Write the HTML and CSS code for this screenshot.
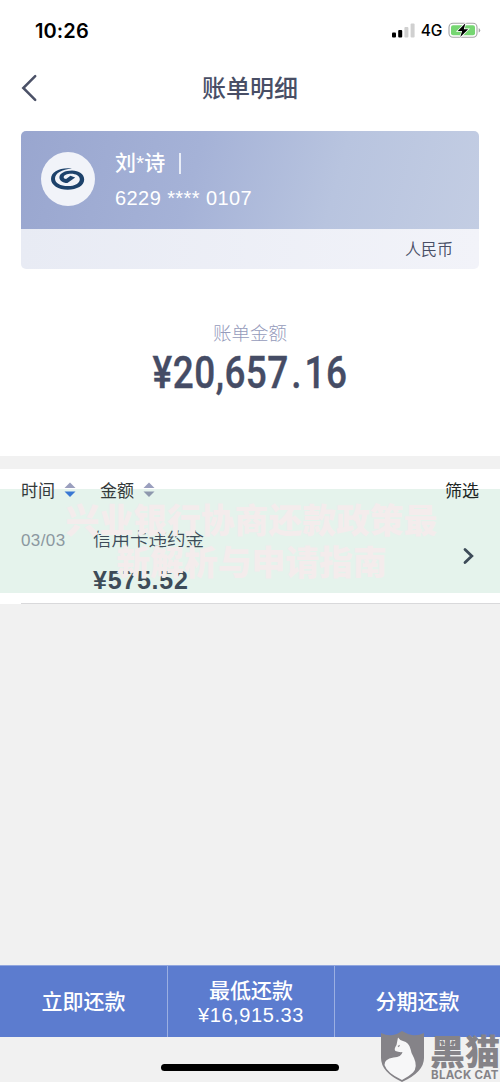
FILE: index.html
```html
<!DOCTYPE html>
<html lang="zh-CN">
<head>
<meta charset="utf-8">
<title>账单明细</title>
<link rel="stylesheet" href="styles.css">
</head>
<body>
<div class="screen">
  <div class="status">
    <span class="clock">10:26</span>
    <div class="status-right">
      <svg class="signal" width="23" height="15" viewBox="0 0 23 15"><rect x="0" y="9.5" width="4" height="5" rx="1"/><rect x="6.2" y="7" width="4" height="7.5" rx="1"/><rect class="off" x="12.4" y="4" width="4" height="10.5" rx="1"/><rect class="off" x="18.6" y="0.5" width="4" height="14" rx="1"/></svg>
      <span class="network">4G</span>
      <svg class="battery" width="33" height="17" viewBox="0 0 33 17"><rect x="1" y="1.2" width="28" height="14" rx="4" fill="#fff" stroke="#a5a5a5" stroke-width="1.1"/><rect x="3" y="3.2" width="24" height="10" rx="2" fill="#76d672"/><path d="M30.7 6v4.6q1.5-.7 1.5-2.3T30.7 6z" fill="#a5a5a5"/><path d="M17.4 1.3 9.7 9.1h4.4l-1.8 6 7.9-7.8h-4.4z" fill="#000" stroke="#fff" stroke-width="1.5" paint-order="stroke"/></svg>
    </div>
  </div>
  <header class="nav">
    <svg class="back" width="18" height="28" viewBox="0 0 18 28"><path d="M14.2 2.2 2.3 14l11.900 11.800" fill="none" stroke="#4b5167" stroke-width="2.500" stroke-linecap="round"/></svg>
    <h1 class="title">账单明细</h1>
  </header>
  <section class="card">
    <div class="card-main">
      <div class="bank"><svg width="34" height="22" viewBox="0 0 34 22"><path fill="#1d426b" d="M21 .6C9-.8 0 4 0 11c0 6.200 7.300 10.700 16.700 10.700 9.200 0 16.500-4.300 16.500-10.300 0-5.300-5.300-9-12.200-9C14 2.400 8.400 5.300 8.400 9.200c0 3.200 3 5.500 8 5.900l7.800-5.500-4.800-1.900-4.300 3.300c-1.500-.2-2.400-.9-2.400-1.800 0-1.900 3.300-3.400 7.300-3.400 5 0 8.800 2.200 8.800 5.400 0 4-5.100 6.900-12 6.900-7.300 0-12.800-3-12.800-7.400C4 5.500 10.500 1.500 21 .6z"/></svg></div>
      <div class="holder">
        <div class="name"><span>刘*诗</span><i class="bar"></i></div>
        <div class="number">6229 **** 0107</div>
      </div>
    </div>
    <div class="currency">人民币</div>
  </section>
  <section class="summary">
    <div class="summary-label">账单金额</div>
    <div class="total">¥20,657<span class="point">.</span>16</div>
  </section>
  <section class="list">
    <div class="filters">
      <span class="sort">时间<svg width="12" height="16" viewBox="0 0 12 16"><path d="M.5 6 6 .5 11.500 6z" fill="#9a9fbe"/><path d="M.5 9.500h11L6 15z" fill="#3978d3"/></svg></span>
      <span class="sort">金额<svg width="12" height="16" viewBox="0 0 12 16"><path d="M.5 6 6 .5 11.500 6z" fill="#9a9fbe"/><path d="M.5 9.500h11L6 15z" fill="#8e98ad"/></svg></span>
      <span class="screening">筛选</span>
    </div>
    <div class="entry">
      <span class="date">03/03</span>
      <div class="detail"><div class="desc">信用卡违约金</div><div class="amount">¥575.52</div></div>
      <svg class="next" width="12" height="18" viewBox="0 0 12 18"><path d="M2 2.500 8.800 9 2 15.500" fill="none" stroke="#3d4b58" stroke-width="2.800" stroke-linecap="round"/></svg>
    </div>
    <div class="banner">兴业银行协商还款政策最<br>新解析与申请指南</div>
  </section>
  <footer class="actions">
    <div class="action">立即还款</div>
    <div class="action"><span>最低还款</span><span class="minimum">¥16,915.33</span></div>
    <div class="action">分期还款</div>
  </footer>
  <div class="home"></div>
  <div class="watermark">
    <svg width="45" height="52" viewBox="0 0 45 52"><path d="M1 2q6 3 12 2 5-1 9-4 5 3 10 4 6 1 12-2v25q0 14-22 24Q1 41 1 27z" fill="#858388"/><path d="M18 6.500q2 3 5 3.500 6 1.500 7.500 8 .5 4 3.500 9 4 9-1 14.500-4 4-11 7.500Q7 42 4.500 34q-.5-6 9-7.500 8-.5 9-5.500-3.500.5-7-1-2-1.500 1-6z" fill="#f7f7f8"/><path d="m17.500 15 2.600-1.200-1.200 2.500z" fill="#858388"/></svg>
    <div class="brand"><div class="brand-cn">黑猫</div><div class="brand-en">BLACK CAT</div></div>
  </div>
</div>
</body>
</html>
```
FILE: styles.css
```css
* { box-sizing: border-box; }
body { margin: 0; background: #f1f1f1; font-family: "Liberation Sans", "Noto Sans CJK SC", sans-serif; color: #484e65; }
svg { display: block; flex: none; }
.screen { position: relative; display: flex; flex-direction: column; width: 500px; height: 1082px; overflow: hidden; background: #f1f1f1; }
.status { display: flex; justify-content: space-between; height: 60px; padding: 0 19px 0 35px; background: #fff; color: #000; }
.clock { font: 600 20px/24px Inter, sans-serif; letter-spacing: .1px; padding-top: 19px; }
.status-right { display: flex; align-items: flex-start; padding-top: 22px; }
.signal { margin-top: .5px; }
.signal .off { fill: #d0d0d0; }
.network { font: 500 15.500px/18px Inter, sans-serif; margin: 0 6px 0 6px; letter-spacing: -.3px; }
.nav { display: flex; align-items: center; height: 71px; background: #fff; padding: 0 21px 16px; }
.title { flex: 1; margin: 2px 18px 0 0; text-align: center; font-size: 24px; line-height: 32px; font-weight: 500; }
.card { flex: none; height: 138px; padding: 0 21px; background: #fff; }
.card-main { display: flex; height: 98px; padding: 0 20px; border-radius: 5px 5px 0 0; background: linear-gradient(105deg, #99a6cf, #a5b2d7 38%, #b8c4df 68%, #c3cde3); color: #fff; }
.bank { display: grid; place-items: center; width: 54px; height: 54px; margin-top: 21px; border-radius: 50%; background: #f1f3f9; }
.holder { padding: 17px 0 0 20px; }
.name { display: flex; align-items: center; font-size: 21px; line-height: 30px; font-weight: 500; }
.bar { width: 1.500px; height: 21px; margin-left: 14px; background: #e8edf7; }
.number { margin-top: 5px; font-size: 20px; line-height: 30px; letter-spacing: .42px; }
.currency { height: 40px; padding-right: 26px; text-align: right; font-size: 16px; line-height: 41px; border-radius: 0 0 5px 5px; background: linear-gradient(90deg, #e8ebf4, #f2f3f9); font-weight: 350; }
.summary { flex: none; height: 187px; padding-top: 51px; background: #fff; text-align: center; }
.summary-label { font-size: 18.500px; line-height: 28px; color: #959bbb; font-weight: 300; }
.total { font: 500 45px/50px Roboto, sans-serif; transform: scaleX(.82); color: #454c65; letter-spacing: .6px; -webkit-text-stroke: .4px #454c65; white-space: nowrap; }
.point { margin: 0 3px; }
.list { position: relative; height: 149px; margin-top: 13px; background: linear-gradient(#fff 135px, #f1f1f1 135px); flex: none; }
.list::after { content: ""; position: absolute; left: 21px; right: 0; top: 134px; height: 1px; background: #d9d9db; }
.filters { display: flex; align-items: center; height: 41px; padding: 0 21px; background: linear-gradient(#fff 20px, #e5f3ec 20px); color: #343a3b; font-size: 17px; }
.sort { display: flex; align-items: center; gap: 9px; margin-right: 24px; }
.screening { margin-left: auto; color: #202624; }
.entry { display: flex; height: 83px; padding: 0 25px 0 21px; background: #e5f3ec; }
.date { width: 72px; padding-top: 20px; font-size: 17px; line-height: 22px; letter-spacing: .4px; color: #8b98a0; }
.detail { color: #3d4b58; padding-top: 16px; }
.desc { font-size: 18.500px; line-height: 28px; font-weight: 350; }
.amount { font-size: 25px; line-height: 28px; font-weight: 700; letter-spacing: .75px; margin-top: 12px; }
.next { margin: 37px 0 0 auto; }
.banner { position: absolute; top: 29px; left: 0; width: 503px; text-align: center; color: #f4ecec; font: 900 33.800px/42px "Noto Sans CJK SC", sans-serif; }
.actions { display: grid; grid-template-columns: 167px 167px 166px; flex: none; height: 72px; margin-top: 347px; background: #5c7ccf; border-top: 1px solid #91a6de; color: #fff; }
.action { display: flex; flex-direction: column; align-items: center; justify-content: center; font-size: 21px; line-height: 26px; font-weight: 500; }
.action + .action { border-left: 1px solid #9bafe2; }
.minimum { font-size: 20px; line-height: 22px; font-weight: 400; letter-spacing: .6px; }
.home { width: 178px; height: 7px; margin: 27px auto 0; border-radius: 4px; background: #000; flex: none; }
.watermark { position: absolute; left: 380px; top: 1031px; display: flex; color: #858388; }
.brand { margin-left: 5px; margin-top: 1px; }
.brand-cn { font: 900 35px/35px "Noto Sans CJK SC", sans-serif; white-space: nowrap; }
.brand-en { font: 700 11.500px/14px Inter, sans-serif; letter-spacing: .3px; margin: 1px 0 0 1px; white-space: nowrap; }
```
